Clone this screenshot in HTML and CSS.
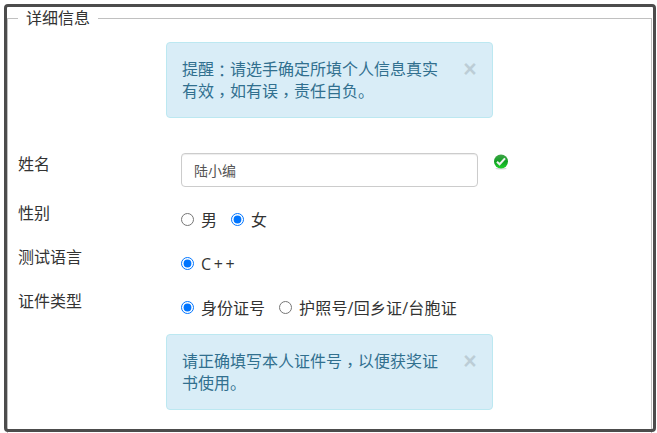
FILE: index.html
```html
<!DOCTYPE html>
<html lang="zh-CN">
<head>
  <meta charset="UTF-8">
  <meta name="viewport" content="width=device-width, initial-scale=1.0">
  <title>详细信息</title>
  <link rel="stylesheet" href="styles.css">
</head>
<body>
  <form class="frame">
    <fieldset>
      <legend>详细信息</legend>

      <div class="alert">
        <p>提醒<span class="punct" lang="zh-TW">：</span>请选手确定所填个人信息真实有效<span class="punct comma" lang="zh-TW">，</span>如有误<span class="punct comma" lang="zh-TW">，</span>责任自负。</p>
        <button type="button" class="close">×</button>
      </div>

      <div class="row row-name">
        <label class="title" for="name">姓名</label>
        <input type="text" id="name" class="form-control" value="陆小编">
        <svg class="ok" width="16" height="16" viewBox="0 0 16 16">
          <defs>
            <linearGradient id="green" x1="0" y1="0" x2="0" y2="1">
              <stop offset="0" stop-color="#3fa548"/>
              <stop offset="0.5" stop-color="#12a024"/>
              <stop offset="1" stop-color="#1fd22b"/>
            </linearGradient>
          </defs>
          <ellipse cx="8" cy="14.6" rx="5.5" ry="1" fill="#d9d9d9"/>
          <circle cx="8" cy="7.5" r="7" fill="url(#green)"/>
          <path d="M4 7.8L6.6 10.3L12 4.4" fill="none" stroke="#f2f2f2" stroke-width="2.1"/>
        </svg>
      </div>

      <div class="row">
        <span class="title">性别</span>
        <div class="options">
          <label><input type="radio" name="sex">男</label>
          <label><input type="radio" name="sex" checked>女</label>
        </div>
      </div>

      <div class="row">
        <span class="title">测试语言</span>
        <div class="options">
          <label class="lang"><input type="radio" name="lang" checked>C++</label>
        </div>
      </div>

      <div class="row">
        <span class="title">证件类型</span>
        <div class="options">
          <label><input type="radio" name="card" checked>身份证号</label>
          <label class="passport"><input type="radio" name="card">护照号/回乡证/台胞证</label>
        </div>
      </div>

      <div class="alert">
        <p>请正确填写本人证件号<span class="punct comma" lang="zh-TW">，</span>以便获奖证书使用。</p>
        <button type="button" class="close">×</button>
      </div>
    </fieldset>
  </form>
</body>
</html>
```
FILE: styles.css
```css
* {
  box-sizing: border-box;
}
html {
  overflow: hidden;
}
body {
  margin: 0;
  padding: 7px 4px 0 7px;
  height: 433px;
  overflow: hidden;
  background: #fff;
  color: #333;
  font-family: "Open Sans", "Noto Sans CJK SC", sans-serif;
  font-size: 16px;
  line-height: 22px;
}
/* The outline stays on top of the fieldset, which runs past the bottom */
.frame {
  height: 422px;
  outline: 3px solid #4c4c4c;
  border-radius: 1px;
}
fieldset {
  width: 645px;
  height: 440px;
  margin: 0;
  padding: 0 10px;
  border: 1px solid #c0c0c0;
}
legend {
  height: 22px;
  padding: 0 8px;
  white-space: nowrap;
}
.alert {
  display: flex;
  justify-content: space-between;
  width: 327px;
  height: 76px;
  margin-left: 148px;
  padding: 15px;
  border: 1px solid #bce8f1;
  border-radius: 4px;
  background-color: #d9edf7;
  color: #31708f;
}
legend + .alert {
  margin-top: 13px;
}
.alert p {
  width: 258px;
  margin: 0;
}
/* Centred full-width punctuation */
.punct {
  display: inline-block;
  height: 14px;
  font-family: "Noto Sans CJK TC", sans-serif;
  line-height: 14px;
  vertical-align: -2px;
}
.comma {
  vertical-align: -4px;
}
.close {
  width: 14px;
  height: 22px;
  padding: 0;
  border: none;
  background: none;
  color: #000;
  font: bold 23px/21px "Liberation Sans", sans-serif;
  opacity: 0.13;
  cursor: pointer;
}
.row {
  display: flex;
  align-items: flex-start;
  height: 44px;
}
.row-name {
  height: 49px;
  margin-top: 35px;
}
.title {
  width: 163px;
}
.form-control {
  width: 297px;
  height: 34px;
  padding: 6px 12px;
  border: 1px solid #ccc;
  border-radius: 4px;
  box-shadow: inset 0 1px 1px rgba(0, 0, 0, 0.075);
  color: #555;
  font-family: inherit;
  font-size: 14px;
}
.ok {
  margin: 1px 0 0 15px;
}
.options {
  display: flex;
  gap: 14px;
  padding-top: 7px;
}
.options label {
  display: flex;
  align-items: flex-start;
}
.options input {
  width: 13px;
  height: 13px;
  margin: 4px 7px 0 0;
}
.lang {
  letter-spacing: 2.6px;
}
.passport {
  letter-spacing: 0.2px;
}
```
